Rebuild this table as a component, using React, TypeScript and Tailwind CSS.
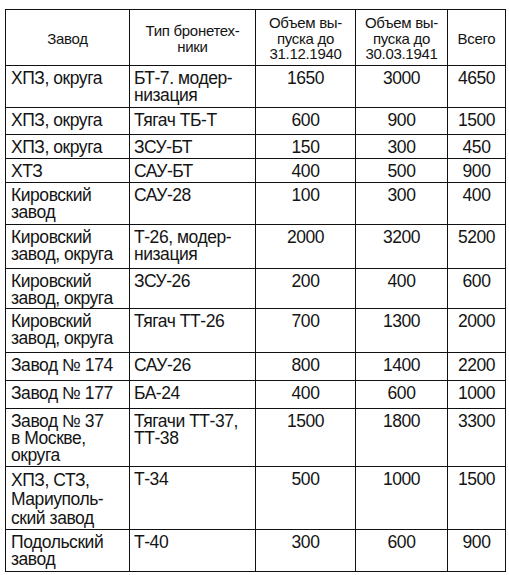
import { Fragment } from 'react';

const rows: { h: string; lead?: string; plant: string[]; type: string[]; a: string; b: string; total: string }[] = [
  { h: 'h-[42px]', plant: ['ХПЗ, округа'], type: ['БТ-7. модер-', 'низация'], a: '1650', b: '3000', total: '4650' },
  { h: 'h-[27px]', plant: ['ХПЗ, округа'], type: ['Тягач ТБ-Т'], a: '600', b: '900', total: '1500' },
  { h: 'h-[24px]', plant: ['ХПЗ, округа'], type: ['ЗСУ-БТ'], a: '150', b: '300', total: '450' },
  { h: 'h-[24px]', plant: ['ХТЗ'], type: ['САУ-БТ'], a: '400', b: '500', total: '900' },
  { h: 'h-[42px]', plant: ['Кировский', 'завод'], type: ['САУ-28'], a: '100', b: '300', total: '400' },
  { h: 'h-[44px]', plant: ['Кировский', 'завод, округа'], type: ['Т-26, модер-', 'низация'], a: '2000', b: '3200', total: '5200' },
  { h: 'h-[40px]', plant: ['Кировский', 'завод, округа'], type: ['ЗСУ-26'], a: '200', b: '400', total: '600' },
  { h: 'h-[44px]', plant: ['Кировский', 'завод, округа'], type: ['Тягач ТТ-26'], a: '700', b: '1300', total: '2000' },
  { h: 'h-[28px]', plant: ['Завод № 174'], type: ['САУ-26'], a: '800', b: '1400', total: '2200' },
  { h: 'h-[28px]', plant: ['Завод № 177'], type: ['БА-24'], a: '400', b: '600', total: '1000' },
  { h: 'h-[58px]', plant: ['Завод № 37', 'в Москве,', 'округа'], type: ['Тягачи ТТ-37,', 'ТТ-38'], a: '1500', b: '1800', total: '3300' },
  { h: 'h-[63px]', lead: 'leading-[19px]', plant: ['ХПЗ, СТЗ,', 'Мариуполь-', 'ский завод'], type: ['Т-34'], a: '500', b: '1000', total: '1500' },
  { h: 'h-[42px]', plant: ['Подольский', 'завод'], type: ['Т-40'], a: '300', b: '600', total: '900' },
];

const cell = 'border border-[#111] align-top pt-[4px] pb-0';
const head = 'border border-[#111] font-normal align-middle text-center pt-[2px]';

function Lines({ items }: { items: string[] }) {
  return (
    <span className="whitespace-nowrap">
      {items.map((l, j) => (
        <Fragment key={j}>
          {j > 0 && <br />}
          {l}
        </Fragment>
      ))}
    </span>
  );
}

export default function App() {
  return (
    <div className="bg-white w-[509px] h-[575px] pt-[9px] pl-[5px] font-['Liberation_Sans',Arial,sans-serif] text-[#141414]">
      <table className="table-fixed border-collapse w-[500px]">
        <colgroup>
          <col className="w-[124px]" />
          <col className="w-[126px]" />
          <col className="w-[100px]" />
          <col className="w-[92px]" />
          <col className="w-[58px]" />
        </colgroup>
        <thead>
          <tr className="h-[56px] text-[15px] leading-[15.5px] tracking-[-0.3px]">
            <th className={head}>Завод</th>
            <th className={head}>
              Тип бронетех-
              <br />
              ники
            </th>
            <th className={head}>
              Объем вы-
              <br />
              пуска до
              <br />
              31.12.1940
            </th>
            <th className={head}>
              Объем вы-
              <br />
              пуска до
              <br />
              30.03.1941
            </th>
            <th className={head}>Всего</th>
          </tr>
        </thead>
        <tbody className="text-[17.5px] leading-[17px] tracking-[-0.45px]">
          {rows.map((r, i) => (
            <tr key={i} className={r.h}>
              <td className={`${cell} pl-[5px] text-left ${r.lead ?? ''}`}>
                <Lines items={r.plant} />
              </td>
              <td className={`${cell} pl-[4px] text-left`}>
                <Lines items={r.type} />
              </td>
              <td className={`${cell} text-center`}>{r.a}</td>
              <td className={`${cell} text-center`}>{r.b}</td>
              <td className={`${cell} text-center`}>{r.total}</td>
            </tr>
          ))}
        </tbody>
      </table>
    </div>
  );
}
